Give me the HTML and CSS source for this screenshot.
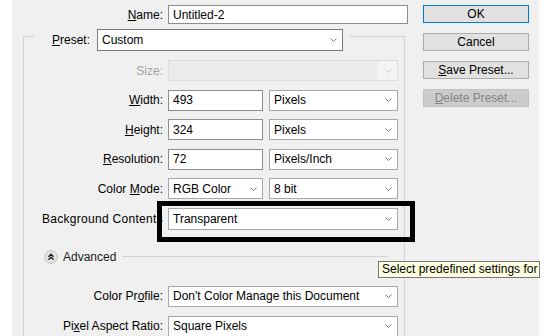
FILE: index.html
```html
<!DOCTYPE html>
<html>
<head>
<meta charset="utf-8">
<link rel="stylesheet" href="styles.css">
</head>
<body>
<div class="screen">
  <div class="dialog">
    <div class="main">
      <div class="row row-name">
        <span class="label label-top"><u>N</u>ame:</span>
        <div class="field input w-name">Untitled-2</div>
      </div>

      <div class="group">
        <div class="group-head">
          <div class="gh-left"></div>
          <span class="label-preset"><u>P</u>reset:</span>
          <div class="field select dark w-preset">Custom
            <svg class="chev" width="7" height="4" viewBox="0 0 7 4"><polyline points="0.5,0.5 3.5,3.5 6.5,0.5"/></svg>
          </div>
          <div class="gh-right"></div>
        </div>

        <div class="group-body">
          <div class="rows">
            <div class="row">
              <span class="label disabled-text">Size:</span>
              <div class="field select disabled w-full">
                <span class="dis-arrow"><svg class="chev light" width="7" height="4" viewBox="0 0 7 4"><polyline points="0.5,0.5 3.5,3.5 6.5,0.5"/></svg></span>
              </div>
            </div>
            <div class="row">
              <span class="label"><u>W</u>idth:</span>
              <div class="field input w-num">493</div>
              <div class="field select w-unit">Pixels
                <svg class="chev" width="7" height="4" viewBox="0 0 7 4"><polyline points="0.5,0.5 3.5,3.5 6.5,0.5"/></svg>
              </div>
            </div>
            <div class="row">
              <span class="label"><u>H</u>eight:</span>
              <div class="field input w-num">324</div>
              <div class="field select w-unit">Pixels
                <svg class="chev" width="7" height="4" viewBox="0 0 7 4"><polyline points="0.5,0.5 3.5,3.5 6.5,0.5"/></svg>
              </div>
            </div>
            <div class="row">
              <span class="label"><u>R</u>esolution:</span>
              <div class="field input w-num">72</div>
              <div class="field select w-unit">Pixels/Inch
                <svg class="chev" width="7" height="4" viewBox="0 0 7 4"><polyline points="0.5,0.5 3.5,3.5 6.5,0.5"/></svg>
              </div>
            </div>
            <div class="row">
              <span class="label">Color <u>M</u>ode:</span>
              <div class="field select w-num">RGB Color
                <svg class="chev" width="7" height="4" viewBox="0 0 7 4"><polyline points="0.5,0.5 3.5,3.5 6.5,0.5"/></svg>
              </div>
              <div class="field select w-unit">8 bit
                <svg class="chev" width="7" height="4" viewBox="0 0 7 4"><polyline points="0.5,0.5 3.5,3.5 6.5,0.5"/></svg>
              </div>
            </div>
            <div class="row row-bg">
              <span class="label label-wide">Background Contents</span>
              <div class="field select w-full">Transparent
                <svg class="chev" width="7" height="4" viewBox="0 0 7 4"><polyline points="0.5,0.5 3.5,3.5 6.5,0.5"/></svg>
              </div>
            </div>
          </div>

          <div class="advanced">
            <svg class="adv-icon" width="14" height="14" viewBox="0 0 14 14">
              <circle cx="7" cy="7" r="6.3" fill="#e6e6e6" stroke="#bdbdbd" stroke-width="0.9"/>
              <polyline points="4.4,6.8 7,4.3 9.6,6.8" fill="none" stroke="#222" stroke-width="1.4"/>
              <polyline points="4.4,9.8 7,7.3 9.6,9.8" fill="none" stroke="#222" stroke-width="1.4"/>
            </svg>
            <span class="adv-text">Advanced</span>
            <div class="adv-line"></div>
          </div>

          <div class="rows2">
            <div class="row">
              <span class="label">Color Pr<u>o</u>file:</span>
              <div class="field select w-full">Don't Color Manage this Document
                <svg class="chev" width="7" height="4" viewBox="0 0 7 4"><polyline points="0.5,0.5 3.5,3.5 6.5,0.5"/></svg>
              </div>
            </div>
            <div class="row">
              <span class="label">Pi<u>x</u>el Aspect Ratio:</span>
              <div class="field select w-full">Square Pixels
                <svg class="chev" width="7" height="4" viewBox="0 0 7 4"><polyline points="0.5,0.5 3.5,3.5 6.5,0.5"/></svg>
              </div>
            </div>
          </div>
        </div>
      </div>
    </div>

    <div class="buttons">
      <div class="btn btn-default">OK</div>
      <div class="btn">Cancel</div>
      <div class="btn"><u>S</u>ave Preset...</div>
      <div class="btn btn-disabled"><u>D</u>elete Preset...</div>
    </div>
  </div>

  <div class="highlight"></div>
  <div class="tooltip">Select predefined settings for</div>
</div>
</body>
</html>
```

FILE: styles.css
```css
html, body {
  margin: 0;
  padding: 0;
  background: #ffffff;
}

body {
  font-family: "Liberation Sans", Arial, sans-serif;
  font-size: 12px;
  color: #000;
}

u {
  text-decoration: underline;
  text-underline-offset: 1px;
}

.screen {
  position: relative;
  width: 560px;
  height: 336px;
  overflow: hidden;
}

.dialog {
  margin-left: 12px;
  width: 527px;
  height: 336px;
  background: #f0f0f0;
  display: flex;
  overflow: hidden;
}

.main {
  width: 399px;
  padding-top: 5px;
  flex: none;
}

/* rows */
.row {
  display: flex;
  align-items: center;
  height: 21px;
}

.row-name {
  height: 19px;
}

.label {
  width: 139px;
  flex: none;
  text-align: right;
  padding-right: 5px;
  white-space: nowrap;
}

.label-top {
  width: 151px;
}

.label-wide {
  direction: rtl;
  text-align: right;
  padding-right: 0;
  margin-right: 5px;
  width: 139px;
  letter-spacing: 0.3px;
  overflow: visible;
}

.disabled-text {
  color: #a3a3a3;
}

/* fields */
.field {
  box-sizing: border-box;
  height: 100%;
  background: #fff;
  border: 1px solid #a8a8a8;
  padding-left: 4px;
  display: flex;
  align-items: center;
  position: relative;
  white-space: nowrap;
  flex: none;
}

.input {
  border-color: #8d8d8d;
}

.select.dark {
  border-color: #7a7a7a;
}

.w-name { width: 240px; }
.w-preset { width: 246px; height: 22px; }
.w-full { width: 230px; }
.w-num { width: 95px; }
.w-unit { width: 129px; margin-left: 6px; }

.chev {
  position: absolute;
  right: 5px;
  top: 50%;
  margin-top: -2px;
  fill: none;
  stroke: #7d7d7d;
  stroke-width: 1;
}

.chev.light {
  stroke: #c2c2c2;
}

.select.disabled {
  background: #ececec;
  border-color: #dcdcdc;
  padding: 0;
  justify-content: flex-end;
}

.dis-arrow {
  width: 19px;
  height: 100%;
  background: #f4f4f4;
  position: relative;
}

/* group box */
.group {
  margin-left: 11px;
  margin-top: 5px;
  width: 382px;
}

.group-head {
  display: flex;
  align-items: flex-start;
  height: 22px;
}

.gh-left {
  width: 10px;
  flex: none;
  align-self: stretch;
  margin-top: 7px;
  border-top: 1px solid #d3d3d3;
  border-left: 1px solid #d3d3d3;
}

.label-preset {
  margin-left: 18px;
  width: 40px;
  margin-right: 5px;
  flex: none;
  line-height: 22px;
  white-space: nowrap;
}

.gh-right {
  flex: 1;
  align-self: stretch;
  margin-top: 7px;
  margin-left: 7px;
  border-top: 1px solid #d3d3d3;
  border-right: 1px solid #d3d3d3;
}

.group-body {
  border-left: 1px solid #d3d3d3;
  border-right: 1px solid #d3d3d3;
  padding-top: 9px;
  padding-bottom: 40px;
}

.rows {
  display: flex;
  flex-direction: column;
  gap: 8.6px;
}

.row-bg {
  height: 22px;
}

.advanced {
  display: flex;
  align-items: center;
  height: 14px;
  margin-top: 20px;
  padding-left: 20px;
}

.adv-icon {
  flex: none;
}

.adv-text {
  margin-left: 5px;
  color: #1a1a1a;
}

.adv-line {
  flex: 1;
  height: 0;
  border-top: 1px solid #d3d3d3;
  margin-left: 6px;
  margin-right: 15px;
}

.rows2 {
  display: flex;
  flex-direction: column;
  gap: 9px;
  margin-top: 22px;
}

/* buttons */
.buttons {
  margin-left: 12px;
  width: 106px;
  padding-top: 5px;
  display: flex;
  flex-direction: column;
  gap: 10px;
}

.btn {
  box-sizing: border-box;
  height: 18px;
  background: #e1e1e1;
  border: 1px solid #adadad;
  display: flex;
  align-items: center;
  justify-content: center;
  white-space: nowrap;
}

.btn-default {
  border-color: #0078d7;
}

.btn-disabled {
  background: #cccccc;
  border-color: #c2c2c2;
  color: #838383;
}

/* overlays */
.highlight {
  position: absolute;
  left: 157px;
  top: 201px;
  width: 258px;
  height: 41px;
  box-sizing: border-box;
  border: 5px solid #000;
}

.tooltip {
  position: absolute;
  left: 378px;
  top: 261px;
  width: 162px;
  height: 17px;
  box-sizing: border-box;
  background: #ffffe1;
  border: 1px solid #767676;
  padding-left: 3px;
  line-height: 15px;
  white-space: nowrap;
}
```
